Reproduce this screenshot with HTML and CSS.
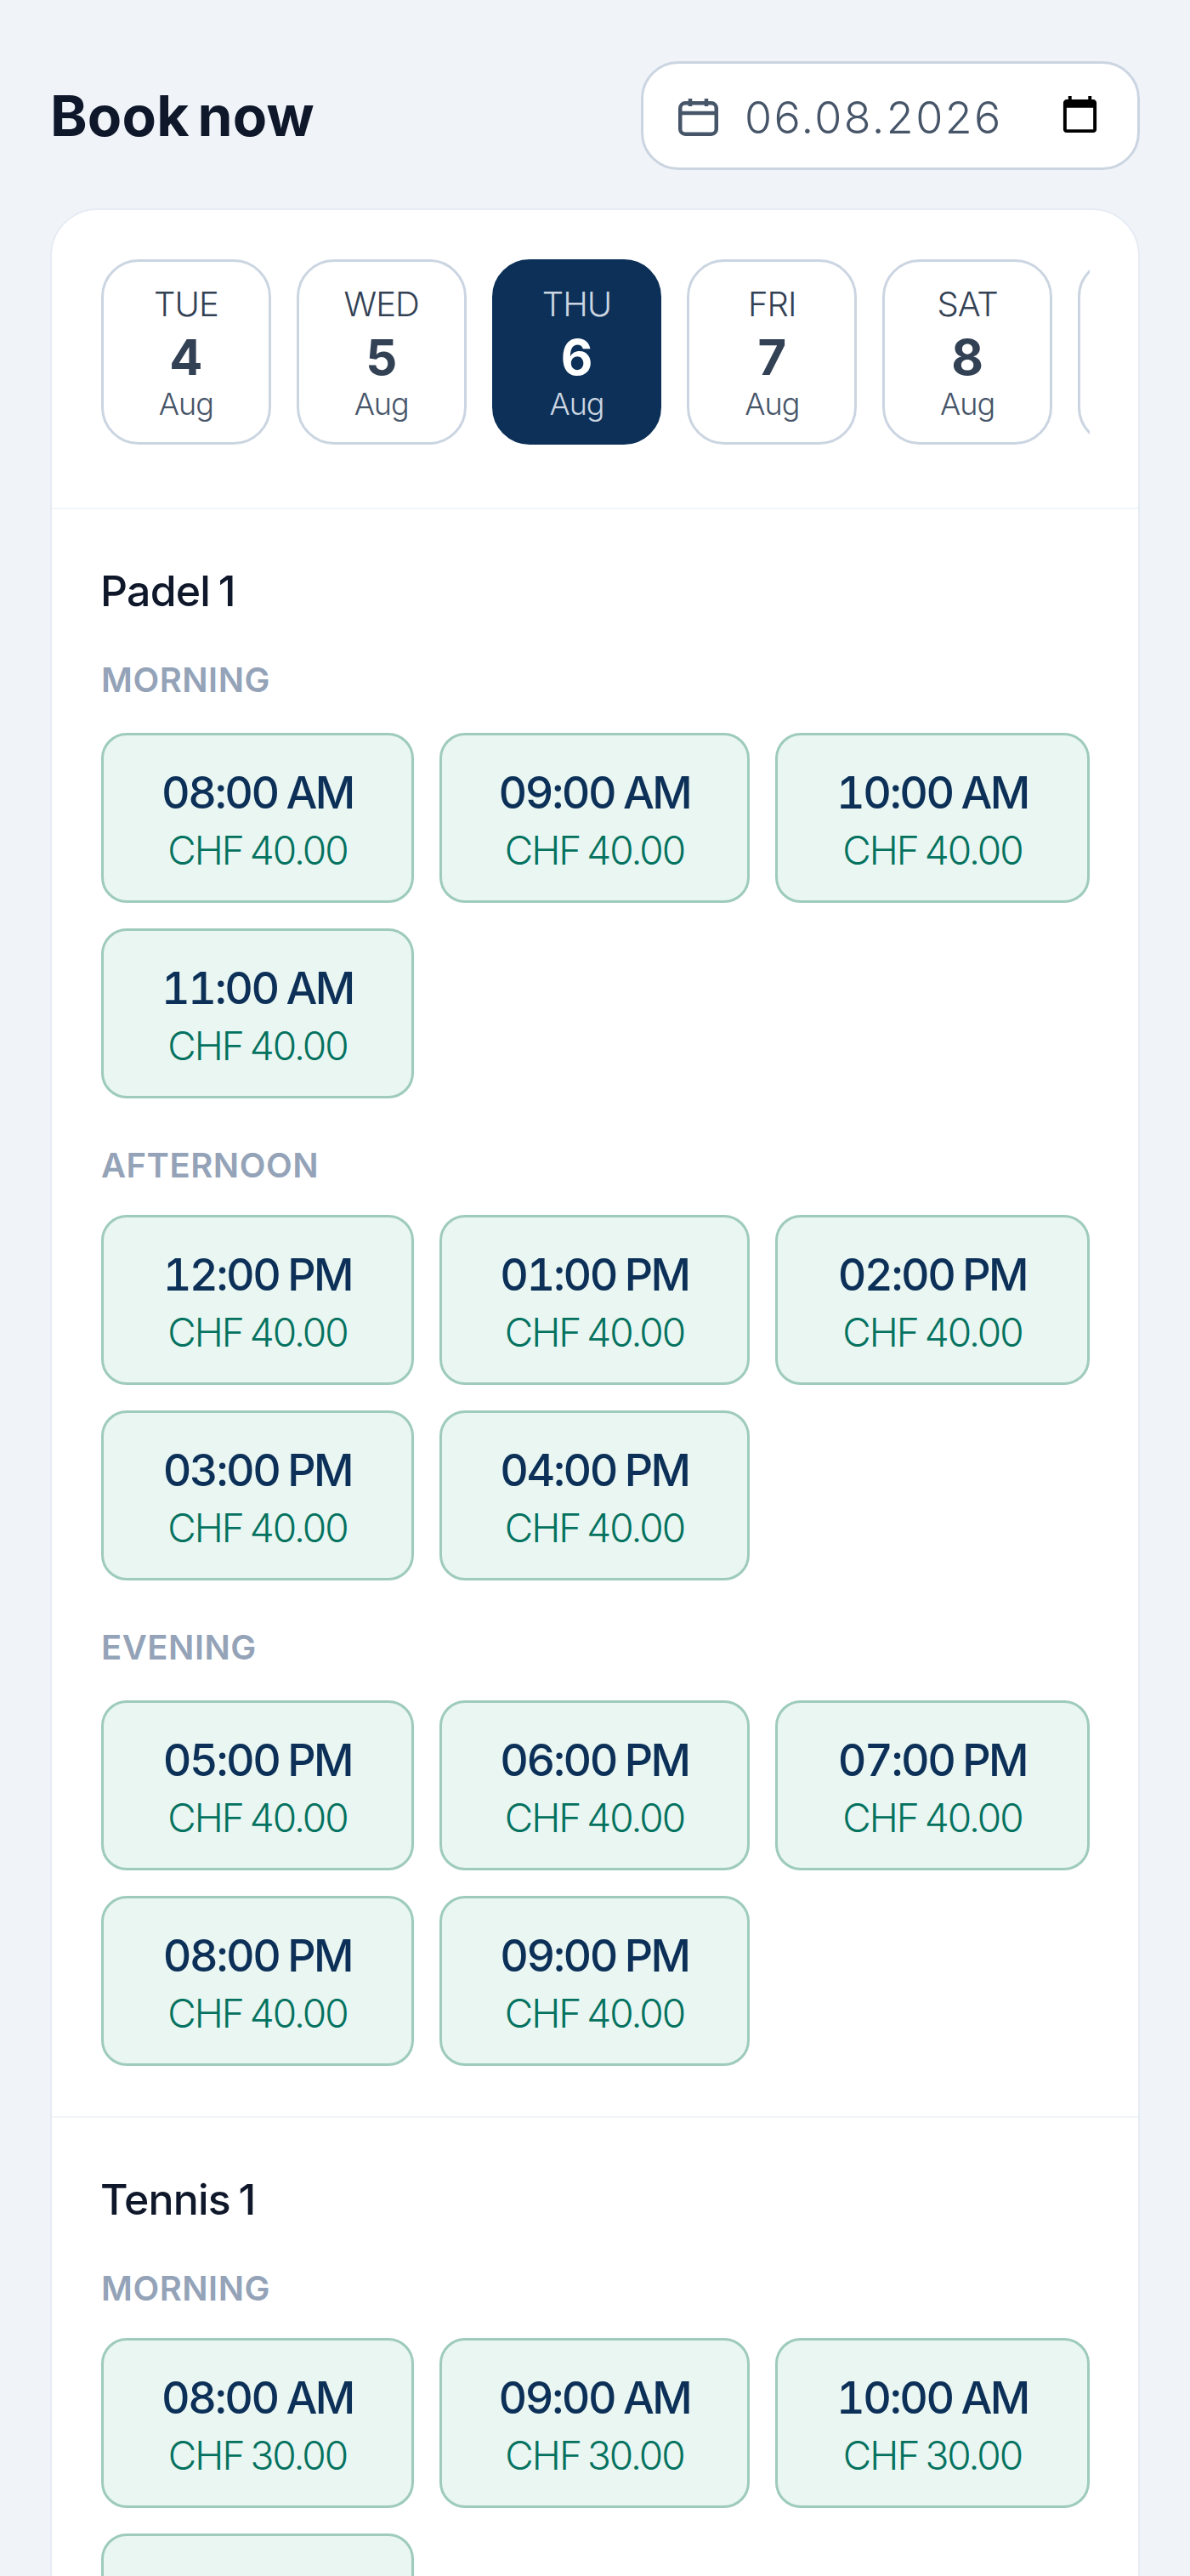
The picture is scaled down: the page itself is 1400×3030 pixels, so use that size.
FILE: index.html
```html
<!DOCTYPE html>
<html lang="en">
<head>
    <meta charset="UTF-8">
    <meta name="viewport" content="width=device-width, initial-scale=1.0">
    <title>Book now</title>
    <link rel="stylesheet" href="styles.css">
</head>
<body>
    <header class="page-header">
        <h1 class="page-title">Book now</h1>
        <div class="date-field">
            <svg class="date-icon" viewBox="0 0 47 44" fill="none" stroke="#475569" stroke-width="4.5" stroke-linejoin="round">
                <rect x="2.25" y="5.25" width="42.5" height="36.5" rx="6"/>
                <path d="M2 17h43M14 0v9M33 0v9"/>
            </svg>
            <span class="date-value">06.08.2026</span>
            <svg class="date-picker" viewBox="0 0 24 24" fill="#000">
                <path d="M20 3h-1V1h-2v2H7V1H5v2H4c-1.1 0-2 .9-2 2v16c0 1.1.9 2 2 2h16c1.1 0 2-.9 2-2V5c0-1.1-.9-2-2-2zm0 18H4V8h16v13z"/>
            </svg>
        </div>
    </header>

    <main class="booking-card">
        <div class="day-strip">
            <div class="day-tab"><span class="day-name">TUE</span><span class="day-num">4</span><span class="day-month">Aug</span></div>
            <div class="day-tab"><span class="day-name">WED</span><span class="day-num">5</span><span class="day-month">Aug</span></div>
            <div class="day-tab active"><span class="day-name">THU</span><span class="day-num">6</span><span class="day-month">Aug</span></div>
            <div class="day-tab"><span class="day-name">FRI</span><span class="day-num">7</span><span class="day-month">Aug</span></div>
            <div class="day-tab"><span class="day-name">SAT</span><span class="day-num">8</span><span class="day-month">Aug</span></div>
            <div class="day-tab edge"></div>
        </div>

        <section class="court">
            <h2 class="court-name">Padel 1</h2>

            <h3 class="period">MORNING</h3>
            <div class="slots">
                <div class="slot"><span class="slot-time">08:00 AM</span><span class="slot-price">CHF 40.00</span></div>
                <div class="slot"><span class="slot-time">09:00 AM</span><span class="slot-price">CHF 40.00</span></div>
                <div class="slot"><span class="slot-time">10:00 AM</span><span class="slot-price">CHF 40.00</span></div>
                <div class="slot"><span class="slot-time">11:00 AM</span><span class="slot-price">CHF 40.00</span></div>
            </div>

            <h3 class="period tight">AFTERNOON</h3>
            <div class="slots">
                <div class="slot"><span class="slot-time">12:00 PM</span><span class="slot-price">CHF 40.00</span></div>
                <div class="slot"><span class="slot-time">01:00 PM</span><span class="slot-price">CHF 40.00</span></div>
                <div class="slot"><span class="slot-time">02:00 PM</span><span class="slot-price">CHF 40.00</span></div>
                <div class="slot"><span class="slot-time">03:00 PM</span><span class="slot-price">CHF 40.00</span></div>
                <div class="slot"><span class="slot-time">04:00 PM</span><span class="slot-price">CHF 40.00</span></div>
            </div>

            <h3 class="period">EVENING</h3>
            <div class="slots">
                <div class="slot"><span class="slot-time">05:00 PM</span><span class="slot-price">CHF 40.00</span></div>
                <div class="slot"><span class="slot-time">06:00 PM</span><span class="slot-price">CHF 40.00</span></div>
                <div class="slot"><span class="slot-time">07:00 PM</span><span class="slot-price">CHF 40.00</span></div>
                <div class="slot"><span class="slot-time">08:00 PM</span><span class="slot-price">CHF 40.00</span></div>
                <div class="slot"><span class="slot-time">09:00 PM</span><span class="slot-price">CHF 40.00</span></div>
            </div>
        </section>

        <section class="court">
            <h2 class="court-name">Tennis 1</h2>

            <h3 class="period tight">MORNING</h3>
            <div class="slots">
                <div class="slot"><span class="slot-time">08:00 AM</span><span class="slot-price">CHF 30.00</span></div>
                <div class="slot"><span class="slot-time">09:00 AM</span><span class="slot-price">CHF 30.00</span></div>
                <div class="slot"><span class="slot-time">10:00 AM</span><span class="slot-price">CHF 30.00</span></div>
                <div class="slot empty"></div>
            </div>
        </section>
    </main>
</body>
</html>
```

FILE: styles.css
```css
* {
    margin: 0;
    padding: 0;
    box-sizing: border-box;
}

html, body {
    height: 3030px;
    overflow: hidden;
}

body {
    font-family: Inter, 'Noto Sans', sans-serif;
    background: #f0f4f9;
    padding: 72px 59px 0 59px;
}

.page-header {
    display: flex;
    justify-content: space-between;
    align-items: center;
    margin-bottom: 45px;
}

.page-title {
    font-size: 66px;
    font-weight: 700;
    letter-spacing: 0.2px;
    word-spacing: -6px;
    color: #0f172a;
}

.date-field {
    display: flex;
    align-items: center;
    width: 587px;
    height: 128px;
    padding: 0 44px 0 41px;
    background: #fff;
    border: 3px solid #cbd5e1;
    border-radius: 44px;
}

.date-icon {
    width: 47px;
    height: 44px;
    margin-right: 31px;
    margin-top: 3px;
}

.date-value {
    flex: 1;
    font-size: 52px;
    font-weight: 300;
    letter-spacing: 2.4px;
    color: #475569;
    padding-top: 5px;
}

.date-picker {
    width: 47px;
    height: 47px;
    margin-bottom: 3px;
}

.booking-card {
    background: #fff;
    border: 2px solid #e6ebf4;
    border-radius: 56px 56px 0 0;
}

.day-strip {
    display: flex;
    gap: 30px;
    margin: 58px 57px 74px 58px;
    overflow: hidden;
}

.day-tab {
    flex: 0 0 199.8px;
    height: 218px;
    padding-bottom: 2px;
    display: flex;
    flex-direction: column;
    align-items: center;
    justify-content: center;
    background: #fff;
    border: 3px solid #cbd5e1;
    border-radius: 44px;
}

.day-name {
    font-size: 40px;
    line-height: 62px;
    font-weight: 300;
    letter-spacing: -1px;
    color: #334155;
}

.day-num {
    font-size: 58px;
    line-height: 62px;
    font-weight: 700;
    color: #334155;
}

.day-month {
    font-size: 36px;
    line-height: 48px;
    font-weight: 300;
    letter-spacing: -1px;
    color: #475569;
}

.day-tab.active {
    background: #0c3057;
    border-color: #0c3057;
}

.day-tab.active .day-name,
.day-tab.active .day-month {
    color: #cbd5e1;
}

.day-tab.active .day-num {
    color: #fff;
}

.court {
    padding: 58px 57px 59px 58px;
    border-top: 2px solid #f1f5f9;
}

.court-name {
    font-size: 50px;
    line-height: 76px;
    font-weight: 500;
    letter-spacing: -0.8px;
    word-spacing: -3px;
    color: #0f172a;
    margin-bottom: 43px;
    margin-left: -1px;
}

.period {
    font-size: 40px;
    line-height: 48px;
    font-weight: 600;
    letter-spacing: 0.5px;
    color: #94a3b8;
    margin-bottom: 38px;
}

.period.tight {
    margin-bottom: 34px;
}

.slots {
    display: grid;
    grid-template-columns: 368px 365px 1fr;
    gap: 30px;
}

.slots + .period {
    margin-top: 55px;
}

.slot {
    height: 200px;
    padding-top: 7px;
    display: flex;
    flex-direction: column;
    align-items: center;
    justify-content: center;
    background: #e9f6f2;
    border: 3px solid #9ecbbb;
    border-radius: 30px;
}

.slot-time {
    font-size: 52px;
    line-height: 68px;
    font-weight: 500;
    font-variant-numeric: tabular-nums;
    letter-spacing: -2.4px;
    word-spacing: -2px;
    color: #0c3057;
}

.slot-price {
    font-size: 46px;
    line-height: 66px;
    font-weight: 300;
    letter-spacing: -2px;
    word-spacing: -3px;
    color: #04725f;
}
```
